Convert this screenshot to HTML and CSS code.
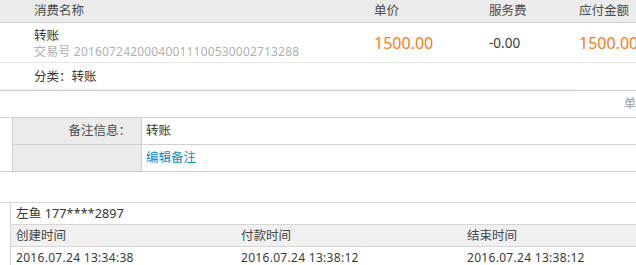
FILE: index.html
```html
<!DOCTYPE html>
<html lang="zh-CN">
<head>
<meta charset="utf-8">
<title>订单详情</title>
<link rel="stylesheet" href="styles.css">
</head>
<body>
<div class="page">
  <div class="order-head">
    <div class="c-name">消费名称</div>
    <div class="c-price">单价</div>
    <div class="c-fee">服务费</div>
    <div class="c-total">应付金额</div>
  </div>
  <div class="order-row">
    <div class="c-name">
      <div class="title">转账</div>
      <div class="trade">交易号 20160724200040011100530002713288</div>
    </div>
    <div class="c-price money">1500.00</div>
    <div class="c-fee fee">-0.00</div>
    <div class="c-total money">1500.00</div>
  </div>
  <div class="cat-row">
    <div class="cat">分类：转账</div>
  </div>
  <div class="unit-row">单</div>
  <div class="remark">
    <div class="remark-row">
      <div class="gap"></div>
      <div class="label">备注信息：</div>
      <div class="value">转账</div>
    </div>
    <div class="remark-row last">
      <div class="gap"></div>
      <div class="label"></div>
      <div class="value"><a class="link" href="#">编辑备注</a></div>
    </div>
  </div>
  <div class="buyer">
    <div class="gap-s"></div>
    <div class="buyer-body">
      <div class="buyer-name">左鱼 177****2897</div>
      <div class="time-head">
        <div>创建时间</div>
        <div>付款时间</div>
        <div>结束时间</div>
      </div>
      <div class="time-row">
        <div>2016.07.24 13:34:38</div>
        <div>2016.07.24 13:38:12</div>
        <div>2016.07.24 13:38:12</div>
      </div>
    </div>
  </div>
</div>
</body>
</html>
```

FILE: styles.css
```css
* { box-sizing: border-box; }
html, body { margin: 0; padding: 0; background: #fff; }
body {
  font-family: "Noto Sans", "Noto Sans CJK SC", sans-serif;
  font-size: 12px;
  color: #333;
  overflow: hidden;
  width: 636px;
  height: 265px;
}
.page { width: 636px; }

.order-head, .order-row {
  display: grid;
  grid-template-columns: 374px 115px 90px 57px;
  white-space: nowrap;
}
.order-head {
  height: 23px;
  background: #ebebeb;
  border-bottom: 1px solid #cfcfcf;
  color: #4a4a4a;
  line-height: 22px;
  font-size: 12.5px;
}
.c-name { padding-left: 34px; }

.order-row {
  height: 40px;
  border-bottom: 1px solid #e6e6e6;
  align-items: center;
}
.order-row .c-name { padding-top: 1px; }
.title { line-height: 16px; font-size: 12.5px; color: #333; }
.trade { line-height: 15px; color: #b0b0b0; letter-spacing: 0.18px; }
.money { color: #ff7a12; font-size: 16px; padding-top: 1px; }
.fee { color: #3a3a3a; font-size: 13.5px; padding-top: 1px; }
.c-total { overflow: hidden; }

.cat-row {
  height: 28px;
  border-bottom: 1px solid #cfcfcf;
}
.cat {
  width: 574px;
  height: 27px;
  padding-left: 34px;
  line-height: 28px;
  font-size: 12.5px;
  border-bottom: 1px solid #ececec;
}

.unit-row {
  height: 27px;
  border-bottom: 1px solid #cfcfcf;
  text-align: right;
  padding-right: 0;
  line-height: 26px;
  color: #9a9a9a;
  font-size: 12px;
}

.remark-row {
  display: grid;
  grid-template-columns: 12px 130px 1fr;
  height: 27px;
}
.remark-row.last .gap { border-bottom: 1px solid #cfcfcf; }
.remark-row .label,
.remark-row .value { border-bottom: 1px solid #cfcfcf; }
.label {
  background: #ebebeb;
  border-left: 1px solid #cfcfcf;
  border-right: 1px solid #cfcfcf;
  text-align: right;
  padding-right: 10px;
  line-height: 26px;
  color: #4a4a4a;
  font-size: 12.5px;
}
.value {
  padding-left: 4px;
  line-height: 26px;
  font-size: 12.5px;
  color: #333;
}
.link { color: #0a8ad6; text-decoration: none; }

.buyer {
  margin-top: 30px;
  border-top: 1px solid #d6d6d6;
  display: grid;
  grid-template-columns: 10px 1fr;
}
.buyer-body { border-left: 1px solid #d6d6d6; }
.buyer-name {
  height: 22px;
  line-height: 21px;
  padding-left: 5px;
  border-bottom: 1px solid #d6d6d6;
  font-size: 12.5px;
  color: #333;
  letter-spacing: 0.15px;
}
.time-head, .time-row {
  display: grid;
  grid-template-columns: 225px 226px 1fr;
  white-space: nowrap;
}
.time-head {
  height: 22px;
  line-height: 21px;
  background: #f0f0f0;
  border-bottom: 1px solid #d6d6d6;
  color: #444;
  font-size: 12.5px;
}
.time-row { line-height: 22px; color: #3a3a3a; letter-spacing: 0.3px; }
.time-head > div, .time-row > div { padding-left: 5px; }
```
